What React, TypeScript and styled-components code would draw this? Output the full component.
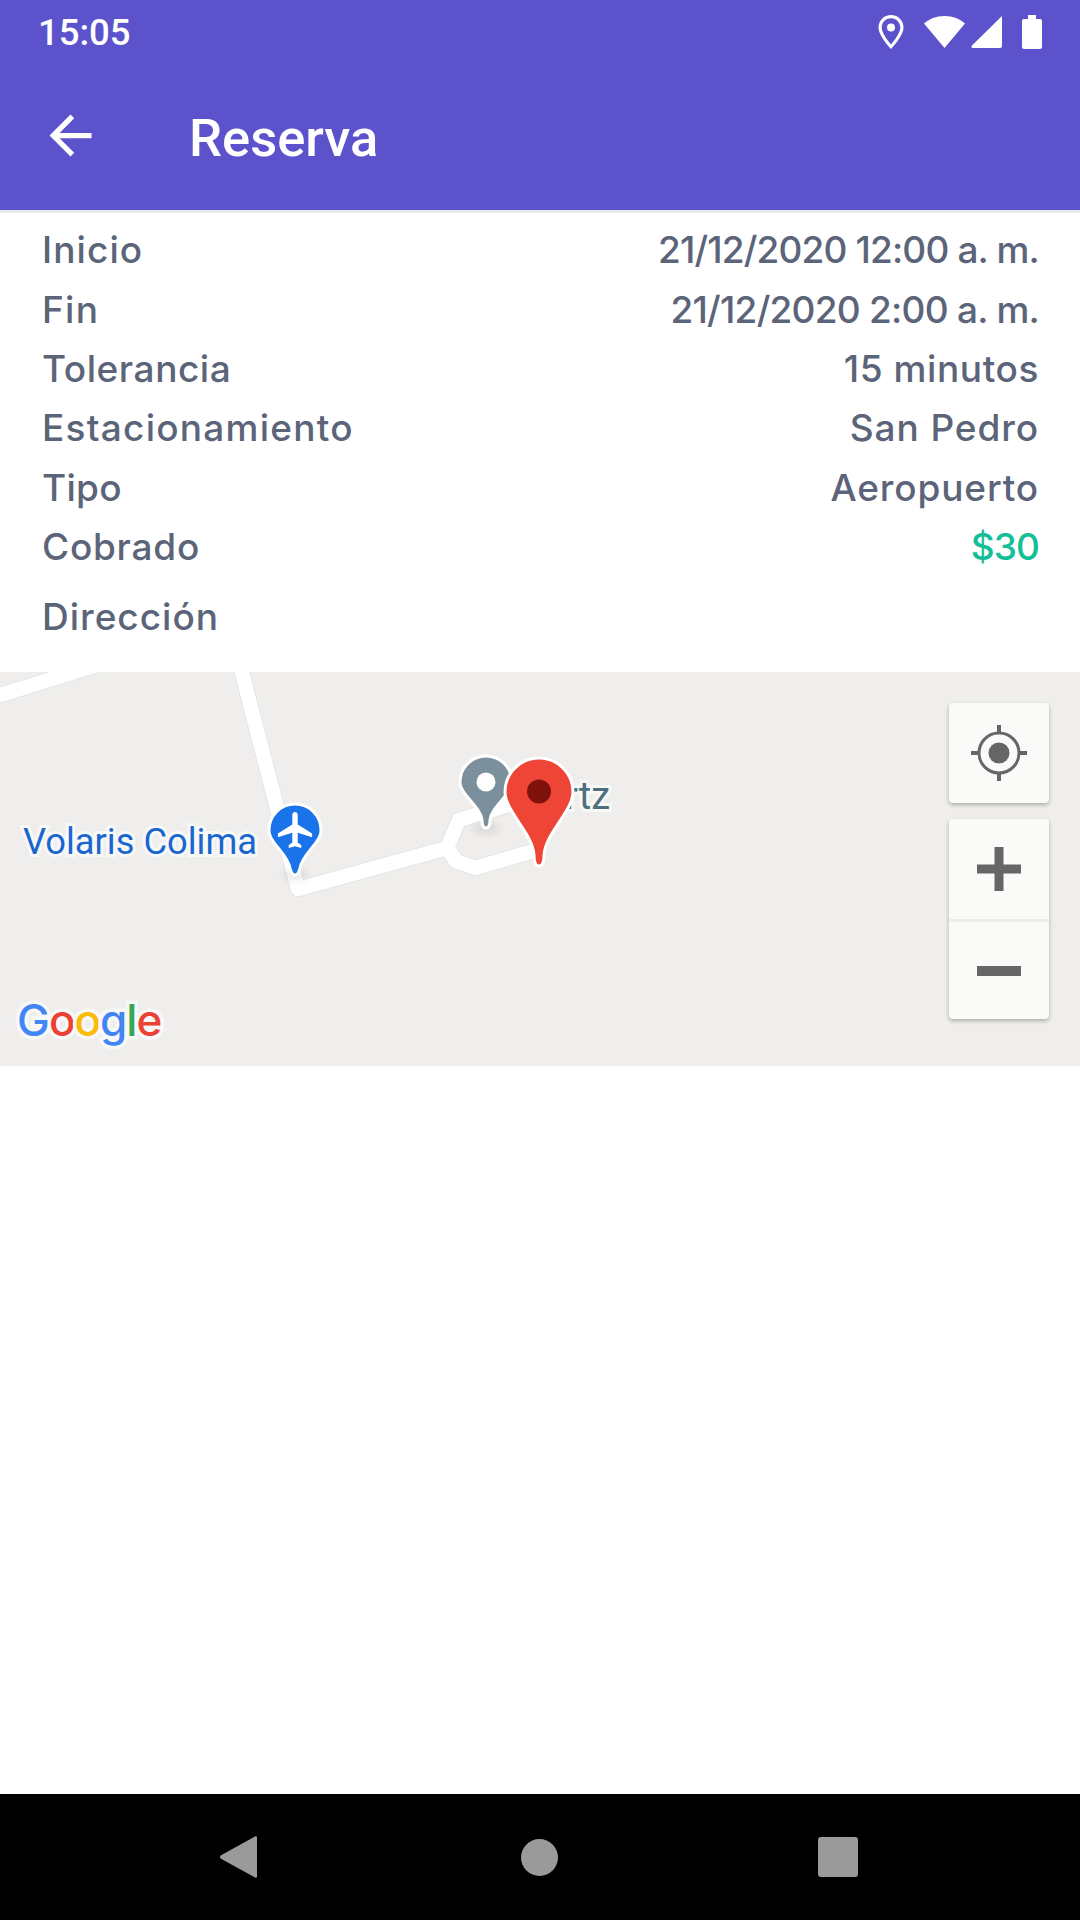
import React from "react";
import styled, { createGlobalStyle } from "styled-components";

const Global = createGlobalStyle`
  html, body { margin: 0; padding: 0; background: #fff; }
  * { box-sizing: border-box; }
`;

const Screen = styled.div`
  width: 1080px;
  height: 1920px;
  display: flex;
  flex-direction: column;
  background: #ffffff;
  overflow: hidden;
`;

const Header = styled.header`
  background: #5c53cc;
`;

const StatusBar = styled.div`
  height: 66px;
  display: flex;
  align-items: center;
  justify-content: space-between;
  padding: 0 38px 0 38px;
  color: #fff;
  font: 500 36.5px/1 Roboto, sans-serif;
`;

const StatusIcons = styled.div`
  display: flex;
  align-items: center;
  margin-top: -3px;
`;

const StatusIcon = styled.svg<{ $gap?: number }>`
  display: block;
  fill: #fff;
  margin-left: ${(p) => p.$gap ?? 0}px;
`;

const Toolbar = styled.div`
  height: 144px;
  display: flex;
  align-items: center;
  padding: 0 0 0 39px;
  color: #fff;
`;

const BackIcon = styled.svg`
  width: 63px;
  height: 63px;
  fill: #fff;
  display: block;
  margin-top: -6px;
`;

const Title = styled.h1`
  margin: 0 0 0 87px;
  font: 500 52.5px/1 Roboto, sans-serif;
  color: #fff;
`;

const Rule = styled.div`
  height: 3px;
  background: #e8e9ef;
`;

const Details = styled.section`
  padding: 7px 41px 0 42px;
  height: 459px;
  display: flex;
  flex-direction: column;
`;

const Row = styled.div`
  height: 59.4px;
  display: flex;
  justify-content: space-between;
  align-items: center;
`;

const AddressRow = styled(Row)`
  margin-top: 10px;
`;

const RowText = styled.span<{ $accent?: boolean; $spacing?: number }>`
  font: 500 37px/1 Inter, sans-serif;
  letter-spacing: ${(p) => p.$spacing ?? 1.25}px;
  color: ${(p) => (p.$accent ? "#14bf98" : "#5b6478")};
  white-space: nowrap;
`;

const MapCanvas = styled.div`
  position: relative;
  height: 394px;
  background: #efeeec;
  overflow: hidden;
`;

const MapLayer = styled.svg`
  position: absolute;
  inset: 0;
  width: 1080px;
  height: 394px;
  display: block;
`;

const MapLabel = styled.span<{ $x: number; $y: number; $color: string; $size: number }>`
  position: absolute;
  left: ${(p) => p.$x}px;
  top: ${(p) => p.$y}px;
  font: 400 ${(p) => p.$size}px/1 Roboto, sans-serif;
  color: ${(p) => p.$color};
  white-space: nowrap;
  -webkit-text-stroke: 6px #f8f8f7;
  paint-order: stroke fill;
`;

const GoogleMark = styled.div`
  position: absolute;
  left: 17px;
  top: 326px;
  font: 500 44px/1 Inter, sans-serif;
  letter-spacing: -1px;
  white-space: nowrap;
  -webkit-text-stroke: 7px #f8f8f7;
  paint-order: stroke fill;
`;

const GoogleLetter = styled.span<{ $c: string }>`
  color: ${(p) => p.$c};
  paint-order: stroke fill;
`;

const Controls = styled.div`
  position: absolute;
  left: 949px;
  top: 31px;
  display: flex;
  flex-direction: column;
  gap: 16px;
`;

const ControlCard = styled.div`
  width: 100px;
  background: #fafaf9;
  border-radius: 4px;
  box-shadow: 0 2px 4px rgba(0, 0, 0, 0.28);
  display: flex;
  flex-direction: column;
`;

const ControlButton = styled.div<{ $divided?: boolean }>`
  height: 100px;
  display: flex;
  align-items: center;
  justify-content: center;
  ${(p) => (p.$divided ? "border-top: 3px solid #ececea;" : "")}
`;

const ControlIcon = styled.svg`
  display: block;
  fill: #666;
`;

const Spacer = styled.div`
  flex: 1;
`;

const NavBar = styled.nav`
  height: 126px;
  background: #000;
  display: flex;
  align-items: center;
  padding-left: 220px;
`;

const NavBack = styled.svg`
  width: 37px;
  height: 42px;
  display: block;
  fill: #9a9a9a;
`;

const NavHome = styled.div`
  width: 37px;
  height: 37px;
  margin-left: 264px;
  border-radius: 50%;
  background: #9a9a9a;
`;

const NavRecent = styled.div`
  width: 40px;
  height: 40px;
  margin-left: 260px;
  border-radius: 3px;
  background: #9a9a9a;
`;

const rows: {
  label: string;
  labelSpacing?: number;
  value: string;
  accent?: boolean;
  spacing?: number;
}[] = [
  { label: "Inicio", labelSpacing: 1.1, value: "21/12/2020 12:00 a. m.", spacing: -0.85 },
  { label: "Fin", value: "21/12/2020 2:00 a. m.", spacing: -0.75 },
  { label: "Tolerancia", labelSpacing: 0.55, value: "15 minutos", spacing: 0.6 },
  { label: "Estacionamiento", value: "San Pedro", spacing: 0.9 },
  { label: "Tipo", labelSpacing: 0.3, value: "Aeropuerto", spacing: 0.85 },
  { label: "Cobrado", labelSpacing: 0.75, value: "$30", accent: true, spacing: -0.9 },
];

const googleLetters: [string, string][] = [
  ["G", "#4285f4"],
  ["o", "#ea4335"],
  ["o", "#fbbc05"],
  ["g", "#4285f4"],
  ["l", "#34a853"],
  ["e", "#ea4335"],
];

const roads = [
  "M0 695 L120 658",
  "M240 665 L298 889 L447 848 L459 820 L515 803",
  "M447 848 L456 861 L475 868 L537 850",
];

const redPin =
  "M539 866 C535 866 534 862 534 855 C533 840 521 827 513 813 C507 804 505 798 505 792 A34 34 0 0 1 573 792 C573 798 571 804 565 813 C557 827 545 840 544 855 C544 862 543 866 539 866 Z";
const greyPin =
  "M486 828 C483 828 482 825 482 820 C481 811 472 803 465 794 C462 790 460 786 460 782 A26 26 0 0 1 512 782 C512 786 510 790 507 794 C500 803 491 811 490 820 C490 825 489 828 486 828 Z";
const bluePin =
  "M295 875 C292 875 291 872 290 868 C288 857 278 849 273 841 C270 837 269 834 269 830 A26 26 0 0 1 321 830 C321 834 320 837 317 841 C312 849 302 857 300 868 C299 872 298 875 295 875 Z";

export default function App() {
  return (
    <Screen>
      <Global />
      <Header>
        <StatusBar>
          <span>15:05</span>
          <StatusIcons>
            <StatusIcon width="26" height="34" viewBox="0 0 26 34">
              <path
                fillRule="evenodd"
                d="M13 0C6 0 0.5 5.5 0.5 12.5C0.5 21 13 34 13 34S25.5 21 25.5 12.5C25.5 5.5 20 0 13 0ZM13 3.2C18.2 3.2 22.3 7.3 22.3 12.5C22.3 17.6 16.6 25.4 13 29.5C9.4 25.4 3.7 17.6 3.7 12.5C3.7 7.3 7.8 3.2 13 3.2Z"
              />
              <circle cx="13" cy="12.5" r="4" />
            </StatusIcon>
            <StatusIcon $gap={20} width="41" height="32" viewBox="0 0 41 32">
              <path d="M20.5 0C12 0 5 3 0 7.5L20.5 32L41 7.5C36 3 29 0 20.5 0Z" />
            </StatusIcon>
            <StatusIcon $gap={6} width="32" height="32" viewBox="0 0 32 32">
              <path d="M31 0V30A2 2 0 0 1 29 32H2C0.4 32 0 31 1 29.5Z" />
            </StatusIcon>
            <StatusIcon $gap={19} width="20" height="34" viewBox="0 0 20 34">
              <path d="M6 0H14V4H18A2 2 0 0 1 20 6V32A2 2 0 0 1 18 34H2A2 2 0 0 1 0 32V6A2 2 0 0 1 2 4H6Z" />
            </StatusIcon>
          </StatusIcons>
        </StatusBar>
        <Toolbar>
          <BackIcon viewBox="0 0 24 24">
            <path d="M20 11H7.83l5.59-5.59L12 4l-8 8 8 8 1.41-1.41L7.83 13H20v-2z" />
          </BackIcon>
          <Title>Reserva</Title>
        </Toolbar>
      </Header>
      <Rule />
      <Details>
        {rows.map((r) => (
          <Row key={r.label}>
            <RowText $spacing={r.labelSpacing}>{r.label}</RowText>
            <RowText $accent={r.accent} $spacing={r.spacing}>{r.value}</RowText>
          </Row>
        ))}
        <AddressRow>
          <RowText $spacing={1}>Dirección</RowText>
        </AddressRow>
      </Details>
      <MapCanvas>
        <MapLayer viewBox="0 672 1080 394">
          {roads.map((d) => (
            <path key={d} d={d} fill="none" stroke="#e2e1df" strokeWidth="16" strokeLinejoin="round" strokeLinecap="round" />
          ))}
          {roads.map((d) => (
            <path key={d + "w"} d={d} fill="none" stroke="#ffffff" strokeWidth="14.5" strokeLinejoin="round" strokeLinecap="round" />
          ))}
        </MapLayer>
        <MapLabel $x={23} $y={152} $color="#1a66d1" $size={36.3}>Volaris Colima</MapLabel>
        <MapLabel $x={565} $y={105} $color="#4f6f7c" $size={38}>rtz</MapLabel>
        <MapLayer viewBox="0 672 1080 394">
          <defs>
            <filter id="pinShadow" x="-50%" y="-50%" width="200%" height="200%">
              <feGaussianBlur stdDeviation="4" />
            </filter>
          </defs>
          <ellipse cx="486" cy="828" rx="13" ry="5" fill="#000" opacity="0.1" filter="url(#pinShadow)" />
          <ellipse cx="295" cy="875" rx="12" ry="5" fill="#000" opacity="0.1" filter="url(#pinShadow)" />
          <path d={bluePin} fill="#1a73e8" stroke="#fff" strokeWidth="3" />
          <path
            transform="translate(274.3 808.4) scale(1.8)"
            fill="#fff"
            d="M21 16v-2l-8-5V3.5c0-.83-.67-1.5-1.5-1.5S10 2.67 10 3.5V9l-8 5v2l8-2.5V19l-2 1.5V22l3.5-1 3.5 1v-1.5L13 19v-5.5l8 2.5z"
          />
          <path d={greyPin} fill="#7b909c" stroke="#fff" strokeWidth="3" />
          <circle cx="486" cy="782" r="9.5" fill="#fff" />
          <path d={redPin} fill="#ee4536" stroke="#fff" strokeWidth="3" />
          <circle cx="539" cy="791.5" r="12" fill="#80120c" />
        </MapLayer>
        <GoogleMark>
          {googleLetters.map(([l, c], i) => (
            <GoogleLetter key={i} $c={c}>{l}</GoogleLetter>
          ))}
        </GoogleMark>
        <Controls>
          <ControlCard>
            <ControlButton>
              <ControlIcon width="56" height="56" viewBox="0 0 56 56">
                <circle cx="28" cy="28" r="20" fill="none" stroke="#666" strokeWidth="3" />
                <circle cx="28" cy="28" r="10.5" />
                <path d="M26 0h4v8h-4zM26 48h4v8h-4zM0 26h8v4H0zM48 26h8v4h-8z" />
              </ControlIcon>
            </ControlButton>
          </ControlCard>
          <ControlCard>
            <ControlButton>
              <ControlIcon width="44" height="44" viewBox="0 0 44 44">
                <path d="M17.5 0h9v17.5H44v9H26.5V44h-9V26.5H0v-9h17.5z" />
              </ControlIcon>
            </ControlButton>
            <ControlButton $divided>
              <ControlIcon width="44" height="10" viewBox="0 0 44 10">
                <path d="M0 0h44v10H0z" />
              </ControlIcon>
            </ControlButton>
          </ControlCard>
        </Controls>
      </MapCanvas>
      <Spacer />
      <NavBar>
        <NavBack viewBox="0 0 37 42">
          <path d="M35 0.6C36 -0.2 37 0.4 37 1.5V40.5C37 41.6 36 42.2 35 41.4L1 22.8C-0.3 22 -0.3 20 1 19.2Z" />
        </NavBack>
        <NavHome />
        <NavRecent />
      </NavBar>
    </Screen>
  );
}
